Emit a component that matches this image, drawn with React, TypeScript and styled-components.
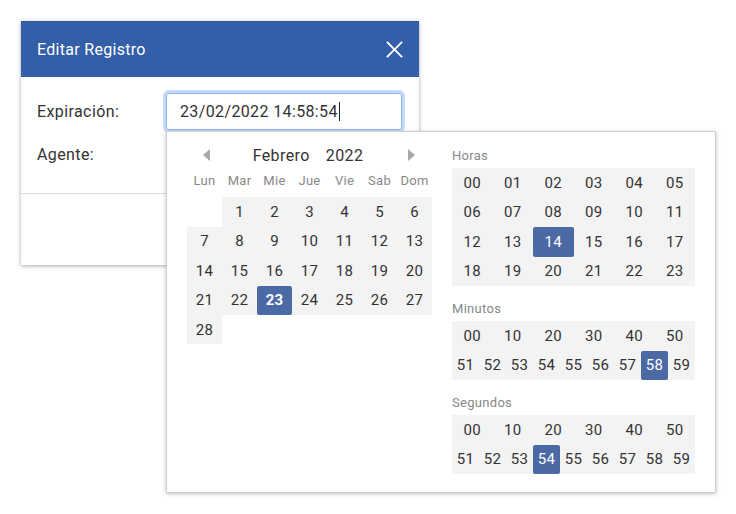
import styled, { createGlobalStyle } from 'styled-components';

const GlobalStyle = createGlobalStyle`
  html, body {
    margin: 0;
    padding: 0;
    background: #fff;
    font-family: Roboto, 'Liberation Sans', Arial, sans-serif;
    color: #333;
  }
`;

const WEEKDAYS = ['Lun', 'Mar', 'Mie', 'Jue', 'Vie', 'Sab', 'Dom'];
const DAYS: (number | null)[] = [null, ...Array.from({ length: 28 }, (_, i) => i + 1)];
const HOURS = Array.from({ length: 24 }, (_, i) => i);
const TENS = [0, 10, 20, 30, 40, 50];
const TAIL = [51, 52, 53, 54, 55, 56, 57, 58, 59];

const pad = (n: number) => String(n).padStart(2, '0');

const App = () => {
  return (
    <Page>
      <GlobalStyle />
      <Dialog>
        <Header>
          <Title>Editar Registro</Title>
          <CloseIcon viewBox="0 0 18 18" aria-hidden>
            <path d="M1 1 L17 17 M17 1 L1 17" stroke="#fff" strokeWidth="2" />
          </CloseIcon>
        </Header>
        <Body>
          <Row>
            <Label>Expiración:</Label>
            <Field>
              <Input>
                23/02/2022 14:58:54<Caret />
              </Input>
              <Picker>
                <Calendar>
                  <MonthBar>
                    <Arrow viewBox="0 0 8 12" aria-hidden>
                      <path d="M7 0 L0 6 L7 12 Z" fill="#a8a8a8" />
                    </Arrow>
                    <MonthTitle>
                      <span>Febrero</span>
                      <span>2022</span>
                    </MonthTitle>
                    <Arrow viewBox="0 0 8 12" aria-hidden>
                      <path d="M1 0 L8 6 L1 12 Z" fill="#a8a8a8" />
                    </Arrow>
                  </MonthBar>
                  <DayGrid>
                    {WEEKDAYS.map((w) => (
                      <Weekday key={w}>{w}</Weekday>
                    ))}
                    {DAYS.map((d, i) =>
                      d === null ? (
                        <EmptyCell key={`e${i}`} />
                      ) : (
                        <DayCell key={d} $selected={d === 23}>
                          {d}
                        </DayCell>
                      )
                    )}
                  </DayGrid>
                </Calendar>
                <TimeColumn>
                  <Section>
                    <SectionLabel>Horas</SectionLabel>
                    <TimeGrid $cols={6}>
                      {HOURS.map((h) => (
                        <TimeCell key={h} $selected={h === 14}>
                          {pad(h)}
                        </TimeCell>
                      ))}
                    </TimeGrid>
                  </Section>
                  <Section>
                    <SectionLabel>Minutos</SectionLabel>
                    <TimeBlock>
                      <TimeGrid $cols={6}>
                        {TENS.map((m) => (
                          <TimeCell key={m}>{pad(m)}</TimeCell>
                        ))}
                      </TimeGrid>
                      <TimeGrid $cols={9}>
                        {TAIL.map((m) => (
                          <TimeCell key={m} $selected={m === 58}>
                            {m}
                          </TimeCell>
                        ))}
                      </TimeGrid>
                    </TimeBlock>
                  </Section>
                  <Section>
                    <SectionLabel>Segundos</SectionLabel>
                    <TimeBlock>
                      <TimeGrid $cols={6}>
                        {TENS.map((s) => (
                          <TimeCell key={s}>{pad(s)}</TimeCell>
                        ))}
                      </TimeGrid>
                      <TimeGrid $cols={9}>
                        {TAIL.map((s) => (
                          <TimeCell key={s} $selected={s === 54}>
                            {s}
                          </TimeCell>
                        ))}
                      </TimeGrid>
                    </TimeBlock>
                  </Section>
                </TimeColumn>
              </Picker>
            </Field>
          </Row>
          <Row>
            <Label>Agente:</Label>
          </Row>
        </Body>
        <Footer />
      </Dialog>
    </Page>
  );
};

export default App;

const Page = styled.div`
  width: 736px;
  height: 514px;
  padding: 21px 0 0 21px;
  box-sizing: border-box;
`;

const Dialog = styled.div`
  width: 398px;
  height: 244px;
  background: #fff;
  box-shadow: 0 1px 4px rgba(0, 0, 0, 0.35);
  display: flex;
  flex-direction: column;
`;

const Header = styled.div`
  height: 56px;
  background: #335ea8;
  display: flex;
  align-items: center;
  justify-content: space-between;
  padding: 0 16px;
  flex-shrink: 0;
`;

const Title = styled.div`
  color: #fff;
  font-size: 16px;
  letter-spacing: 0.3px;
`;

const CloseIcon = styled.svg`
  width: 17px;
  height: 17px;
`;

const Body = styled.div`
  padding: 16px 16px 0 16px;
  height: 117px;
  box-sizing: border-box;
  border-bottom: 1px solid #d9dbe2;
  display: flex;
  flex-direction: column;
  gap: 6px;
`;

const Row = styled.div`
  display: flex;
  align-items: center;
  min-height: 37px;
`;

const Label = styled.div`
  width: 129px;
  font-size: 16px;
  letter-spacing: 0.4px;
  color: #333;
`;

const Field = styled.div`
  position: relative;
`;

const Input = styled.div`
  width: 236px;
  height: 37px;
  box-sizing: border-box;
  border: 1px solid #8fb4ea;
  border-radius: 3px;
  box-shadow: 0 0 0 3px #c3dafc;
  padding: 0 13px;
  display: flex;
  align-items: center;
  font-size: 16px;
  letter-spacing: 0.37px;
  color: #333;
`;

const Caret = styled.span`
  display: inline-block;
  width: 1px;
  height: 19px;
  background: #222;
  margin-left: 1px;
`;

const Footer = styled.div`
  flex: 1;
`;

const Picker = styled.div`
  position: absolute;
  left: 0;
  top: 38px;
  width: 550px;
  height: 362px;
  box-sizing: border-box;
  background: #fff;
  border: 1px solid #cfcfcf;
  box-shadow: 0 1px 4px rgba(0, 0, 0, 0.25);
  display: flex;
  padding: 10px 20px 0 20px;
  gap: 20px;
  z-index: 5;
`;

const Calendar = styled.div`
  width: 245px;
  display: flex;
  flex-direction: column;
`;

const MonthBar = styled.div`
  height: 26px;
  display: flex;
  align-items: center;
  justify-content: space-between;
  padding: 0 17px 0 16px;
`;

const Arrow = styled.svg`
  width: 8px;
  height: 12px;
`;

const MonthTitle = styled.div`
  display: flex;
  gap: 16px;
  font-size: 16px;
  letter-spacing: 0.4px;
  color: #333;
  padding-right: 2px;
`;

const DayGrid = styled.div`
  display: grid;
  grid-template-columns: repeat(7, 35px);
  grid-auto-rows: 29.4px;
`;

const Weekday = styled.div`
  display: flex;
  align-items: center;
  justify-content: center;
  font-size: 13px;
  letter-spacing: 0.3px;
  color: #888;
  height: 24px;
`;

const EmptyCell = styled.div``;

const DayCell = styled.div<{ $selected?: boolean }>`
  display: flex;
  align-items: center;
  justify-content: center;
  font-size: 15px;
  letter-spacing: 0.2px;
  background: ${(p) => (p.$selected ? '#4b69a4' : '#f3f3f3')};
  color: ${(p) => (p.$selected ? '#fff' : '#333')};
  font-weight: ${(p) => (p.$selected ? 700 : 400)};
  border-radius: ${(p) => (p.$selected ? '2px' : '0')};
`;

const TimeColumn = styled.div`
  width: 243px;
  display: flex;
  flex-direction: column;
  gap: 9px;
`;

const Section = styled.div`
  display: flex;
  flex-direction: column;
`;

const SectionLabel = styled.div`
  font-size: 13px;
  letter-spacing: 0.3px;
  color: #888;
  height: 26px;
  display: flex;
  align-items: center;
`;

const TimeBlock = styled.div`
  background: #f3f3f3;
`;

const TimeGrid = styled.div<{ $cols: number }>`
  display: grid;
  grid-template-columns: repeat(${(p) => p.$cols}, 1fr);
  grid-auto-rows: 29.5px;
  background: #f3f3f3;
`;

const TimeCell = styled.div<{ $selected?: boolean }>`
  display: flex;
  align-items: center;
  justify-content: center;
  font-size: 15px;
  letter-spacing: 0.2px;
  background: ${(p) => (p.$selected ? '#4b69a4' : 'transparent')};
  color: ${(p) => (p.$selected ? '#fff' : '#333')};
  border-radius: ${(p) => (p.$selected ? '2px' : '0')};
`;
